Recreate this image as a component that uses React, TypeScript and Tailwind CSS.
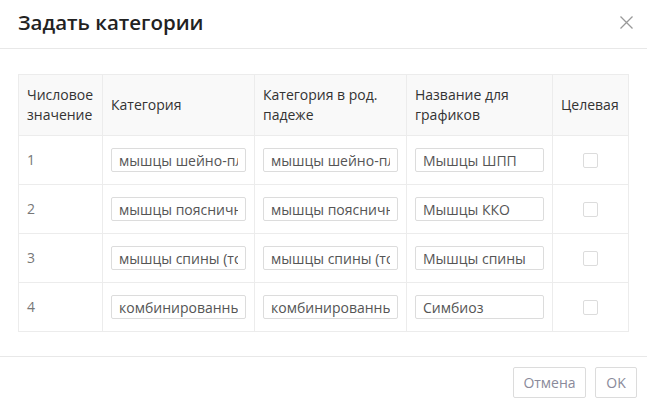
const rows = [
  { n: 1, cat: "мышцы шейно-плечевого пояса", rod: "мышцы шейно-плечевого пояса", name: "Мышцы ШПП" },
  { n: 2, cat: "мышцы поясничного отдела", rod: "мышцы поясничного отдела", name: "Мышцы ККО" },
  { n: 3, cat: "мышцы спины (торс)", rod: "мышцы спины (торс)", name: "Мышцы спины" },
  { n: 4, cat: "комбинированный", rod: "комбинированный", name: "Симбиоз" },
];

const inputCls =
  "w-full h-[24px] border border-[#dcdcdc] rounded-[2px] px-[7px] text-[14px] text-[#555] bg-white outline-none";

const cell = "border border-[#ececec] px-[8px]";

export default function App() {
  return (
    <div
      className="w-[647px] h-[408px] bg-white flex flex-col text-[#555]"
      style={{ fontFamily: '"Open Sans", "Noto Sans", sans-serif' }}
    >
      {/* header */}
      <div className="h-[49px] flex items-center justify-between pl-[18px] pr-[14px] pb-[4px] border-b border-[#e8e8e8]">
        <h2 className="text-[20.5px] font-semibold text-[#222] leading-none">Задать категории</h2>
        <svg width="13" height="13" viewBox="0 0 13 13">
          <path d="M0.5 0.5 L12.5 12.5 M12.5 0.5 L0.5 12.5" stroke="#999" strokeWidth="1.3" />
        </svg>
      </div>

      {/* body */}
      <div className="flex-1 pt-[25px] px-[18px]">
        <table className="w-[610px] table-fixed border-collapse text-[14px] leading-[20px]">
          <colgroup>
            <col className="w-[84px]" />
            <col className="w-[152px]" />
            <col className="w-[152px]" />
            <col className="w-[146px]" />
            <col className="w-[76px]" />
          </colgroup>
          <thead>
            <tr className="bg-[#f9f9f9] h-[61px] text-[#333]">
              <th className={cell + " text-left font-normal"}>Числовое значение</th>
              <th className={cell + " text-left font-normal"}>Категория</th>
              <th className={cell + " text-left font-normal"}>Категория в род. падеже</th>
              <th className={cell + " text-left font-normal"}>Название для графиков</th>
              <th className={cell + " text-left font-normal"}>Целевая</th>
            </tr>
          </thead>
          <tbody>
            {rows.map((r) => (
              <tr key={r.n} className="h-[49px]">
                <td className={cell + " text-[#777]"}>{r.n}</td>
                <td className={cell}>
                  <input className={inputCls} defaultValue={r.cat} />
                </td>
                <td className={cell}>
                  <input className={inputCls} defaultValue={r.rod} />
                </td>
                <td className={cell}>
                  <input className={inputCls} defaultValue={r.name} />
                </td>
                <td className="border border-[#ececec]">
                  <div className="mx-auto w-[15px] h-[15px] border border-[#dcdcdc] rounded-[2px] bg-white" />
                </td>
              </tr>
            ))}
          </tbody>
        </table>
      </div>

      {/* footer */}
      <div className="h-[52px] border-t border-[#e8e8e8] flex items-center justify-end gap-[9px] pr-[10px]">
        <button className="h-[31px] w-[73px] border border-[#dcdcdc] rounded-[2px] text-[14px] text-[#8a8a9a] bg-white">
          Отмена
        </button>
        <button className="h-[31px] w-[42px] border border-[#dcdcdc] rounded-[2px] text-[14px] text-[#8a8a9a] bg-white">
          OK
        </button>
      </div>
    </div>
  );
}
